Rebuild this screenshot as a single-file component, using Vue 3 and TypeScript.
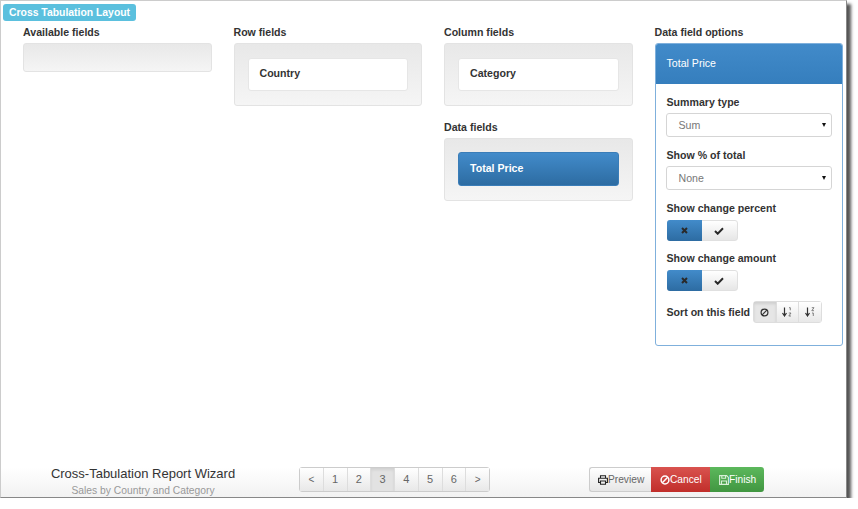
<script setup lang="ts">
const pages: string[] = ['<', '1', '2', '3', '4', '5', '6', '>']
</script>

<template>
  <div class="window">
    <main class="content">
      <div class="legend">Cross Tabulation Layout</div>
      <div class="columns">
        <section class="col">
          <h4>Available fields</h4>
          <div class="well empty"></div>
        </section>
        <section class="col">
          <h4>Row fields</h4>
          <div class="well"><div class="item">Country</div></div>
        </section>
        <section class="col">
          <h4>Column fields</h4>
          <div class="well"><div class="item">Category</div></div>
          <h4 class="second">Data fields</h4>
          <div class="well"><div class="item active">Total Price</div></div>
        </section>
        <section class="col">
          <h4>Data field options</h4>
          <div class="panel">
            <div class="panel-head">Total Price</div>
            <div class="panel-body">
              <label class="lab first">Summary type</label>
              <div class="select"><span>Sum</span><i class="caret"></i></div>
              <label class="lab">Show % of total</label>
              <div class="select"><span>None</span><i class="caret"></i></div>
              <label class="lab">Show change percent</label>
              <div class="toggle">
                <div class="tg on">
                  <svg width="7" height="7" viewBox="0 0 7 7"><path d="M1 1l5 5M6 1l-5 5" stroke="#2a2a2a" stroke-width="2" fill="none"/></svg>
                </div>
                <div class="tg">
                  <svg width="10" height="8" viewBox="0 0 10 8"><path d="M1 4l2.700 2.700L9 1.300" stroke="#2a2a2a" stroke-width="2" fill="none"/></svg>
                </div>
              </div>
              <label class="lab l2">Show change amount</label>
              <div class="toggle">
                <div class="tg on">
                  <svg width="7" height="7" viewBox="0 0 7 7"><path d="M1 1l5 5M6 1l-5 5" stroke="#2a2a2a" stroke-width="2" fill="none"/></svg>
                </div>
                <div class="tg">
                  <svg width="10" height="8" viewBox="0 0 10 8"><path d="M1 4l2.700 2.700L9 1.300" stroke="#2a2a2a" stroke-width="2" fill="none"/></svg>
                </div>
              </div>
              <div class="sort">
                <span class="sort-label">Sort on this field</span>
                <div class="sort-group">
                  <div class="sb pressed">
                    <svg width="9" height="9" viewBox="0 0 9 9"><circle cx="4.500" cy="4.500" r="3.400" stroke="#333" stroke-width="1.200" fill="none"/><path d="M2.200 6.800l4.600-4.600" stroke="#333" stroke-width="1.200"/></svg>
                  </div>
                  <div class="sb">
                    <svg width="10" height="10" viewBox="0 0 10 10"><path d="M2.500 0.500v7.500M0.500 6l2 3 2-3" stroke="#333" stroke-width="1.200" fill="none"/><path d="M7 0.700h1.300v2.600M6.800 6h2.200L6.800 9h2.200" stroke="#666" stroke-width="0.800" fill="none"/></svg>
                  </div>
                  <div class="sb">
                    <svg width="10" height="10" viewBox="0 0 10 10"><path d="M2.500 0.500v7.500M0.500 6l2 3 2-3" stroke="#333" stroke-width="1.200" fill="none"/><path d="M6.800 0.700h2.200L6.800 3.700h2.200M7 6h1.300v3" stroke="#666" stroke-width="0.800" fill="none"/></svg>
                  </div>
                </div>
              </div>
            </div>
          </div>
        </section>
      </div>
    </main>
    <footer class="footer">
      <div class="title">
        <div class="t1">Cross-Tabulation Report Wizard</div>
        <div class="t2">Sales by Country and Category</div>
      </div>
      <nav class="pager">
        <div v-for="(p, i) in pages" :key="i" class="pg" :class="{ cur: p === '3', arrow: p === '<' || p === '>' }">{{ p }}</div>
      </nav>
      <div class="actions">
        <div class="btn preview">
          <svg width="10" height="10" viewBox="0 0 10 10"><path d="M2.500 3V0.700h5V3M2.500 7.500H0.600V3.300h8.800v4.200H7.500M2.500 6h5v3.300h-5z" stroke="#222" stroke-width="1.100" fill="none"/></svg>Preview
        </div>
        <div class="btn cancel">
          <svg width="10" height="10" viewBox="0 0 10 10"><circle cx="5" cy="5" r="3.900" stroke="#fff" stroke-width="1.500" fill="none"/><path d="M2.300 7.700l5.400-5.400" stroke="#fff" stroke-width="1.500"/></svg>Cancel
        </div>
        <div class="btn finish">
          <svg width="10" height="10" viewBox="0 0 10 10"><path d="M0.600 0.600h7L9.400 2.400v7H0.600zM2.800 0.600v2.600h3.800V0.600M2.500 9.400V6h5v3.400" stroke="#d8f0d8" stroke-width="1.100" fill="none"/></svg>Finish
        </div>
      </div>
    </footer>
  </div>
</template>

<style scoped>
.window {
  box-sizing: border-box;
  width: 847px;
  height: 498px;
  background: #fff;
  border: 1px solid #ccc;
  border-right-color: #888;
  border-bottom-color: #888;
  box-shadow: 4px 4px 3px #555;
  display: flex;
  flex-direction: column;
  font-family: "Liberation Sans", Arial, sans-serif;
  color: #333;
}
.content { flex: 1; min-height: 0; padding: 3px 0 0 2px; }
.legend {
  width: 133px;
  height: 17px;
  box-sizing: border-box;
  background: #5bc0de;
  color: #fff;
  font-size: 10.400px;
  font-weight: bold;
  line-height: 17px;
  padding-left: 6px;
  white-space: nowrap;
  border-radius: 3px;
}
.columns { display: flex; gap: 22px; padding-left: 20px; margin-top: 5px; }
.col { width: 188.500px; flex: none; }
h4 { margin: 0; height: 17px; font-size: 10.600px; line-height: 13px; font-weight: bold; color: #333; }
h4.second { margin-top: 15px; }
.well {
  box-sizing: border-box;
  padding: 14px 13px;
  min-height: 29px;
  background: linear-gradient(#e8e8e8, #f5f5f5);
  border: 1px solid #e3e3e3;
  border-radius: 3px;
}
.empty { height: 29px; padding: 0; }
.item {
  box-sizing: border-box;
  height: 33px;
  padding-left: 11px;
  line-height: 29px;
  background: #fff;
  border: 1px solid #e6e6e6;
  border-radius: 3px;
  font-size: 10.600px;
  font-weight: bold;
  color: #333;
}
.item.active {
  background: linear-gradient(#428bca, #2d6ca2);
  border-color: #3a7db8;
  color: #fff;
  height: 34px;
  margin-top: -1px;
  line-height: 30px;
}
.panel {
  box-sizing: border-box;
  height: 303px;
  border: 1px solid #7fb0dc;
  border-radius: 3px;
  overflow: hidden;
}
.panel-head {
  height: 40px;
  margin: -1px -1px 0;
  padding-top: 1px;
  background: linear-gradient(#428bca, #357ebd);
  color: #fff;
  font-size: 10.600px;
  line-height: 39px;
  padding-left: 12px;
}
.panel-body { padding: 0 10px 0 11px; }
.lab { display: block; font-size: 10.600px; font-weight: bold; color: #333; line-height: 13px; margin: 12px 0 4px; }
.lab.first { margin-top: 12px; }
.lab.l2 { margin-top: 11px; }
.select {
  box-sizing: border-box;
  height: 24px;
  margin-left: -1px;
  border: 1px solid #d5d5d5;
  border-radius: 3px;
  background: #fff;
  display: flex;
  align-items: center;
  justify-content: space-between;
  padding: 0 5px 0 12px;
  font-size: 10.600px;
  color: #777;
}
.caret { width: 0; height: 0; border-left: 2.500px solid transparent; border-right: 2.500px solid transparent; border-top: 4px solid #111; }
.toggle {
  display: flex;
  width: 71px;
  height: 21px;
  border-radius: 3px;
  border: 1px solid #e0e0e0;
  box-sizing: border-box;
  background: linear-gradient(#fff, #e6e6e6);
  margin-top: 5px;
}
.tg { flex: 1; display: flex; align-items: center; justify-content: center; }
.tg.on { background: linear-gradient(#428bca, #2d6ca2); border-radius: 3px 0 0 3px; margin: -1px 0 -1px -1px; }
.sort { display: flex; align-items: center; margin-top: 10px; }
.sort-label { font-size: 10.600px; font-weight: bold; white-space: nowrap; margin-right: 3px; }
.sort-group { display: flex; border: 1px solid #ddd; border-radius: 3px; height: 22px; box-sizing: border-box; }
.sb {
  width: 21.500px;
  display: flex;
  align-items: center;
  justify-content: center;
  background: linear-gradient(#fff, #e8e8e8);
  border-left: 1px solid #ddd;
}
.sb:first-child { border-left: none; }
.sb.pressed { background: #e6e6e6; box-shadow: inset 0 2px 3px rgba(0, 0, 0, 0.1); }
.footer {
  height: 30px;
  flex: none;
  display: flex;
  background: linear-gradient(#fff, #f2f2f2);
}
.title { width: 284px; flex: none; text-align: center; }
.t1 { font-size: 13px; line-height: 14px; color: #333; white-space: nowrap; }
.t2 { font-size: 10.300px; line-height: 13px; color: #999; margin-top: 3px; white-space: nowrap; }
.pager {
  display: flex;
  height: 25px;
  margin-left: 14px;
  box-sizing: border-box;
  border: 1px solid #ccc;
  border-radius: 3px;
  width: 191px;
  flex: none;
}
.pg {
  flex: 1;
  box-sizing: border-box;
  border-left: 1px solid #ddd;
  background: linear-gradient(#fff, #e8e8e8);
  text-align: center;
  font-size: 11px;
  line-height: 23px;
  color: #666;
}
.pg:first-child { border-left: none; }
.pg.arrow { font-size: 10px; }
.pg.cur { background: #e2e2e2; box-shadow: inset 0 2px 3px rgba(0, 0, 0, 0.08); }
.actions { display: flex; margin-left: 99px; height: 25px; }
.btn {
  box-sizing: border-box;
  height: 25px;
  display: flex;
  align-items: center;
  font-size: 10.200px;
  padding: 0 0 0 9px;
}
.btn svg { flex: none; }
.preview { width: 62px; background: linear-gradient(#fff, #e6e6e6); border: 1px solid #ccc; border-right: none; border-radius: 3px 0 0 3px; color: #666; padding-left: 8px; }
.cancel { width: 59px; background: linear-gradient(#d9534f, #c12e2a); color: #fff; }
.finish { width: 54px; background: linear-gradient(#5cb85c, #419641); color: #fff; border-radius: 0 3px 3px 0; }
</style>

<style>
html, body { margin: 0; background: #fff; }
</style>
